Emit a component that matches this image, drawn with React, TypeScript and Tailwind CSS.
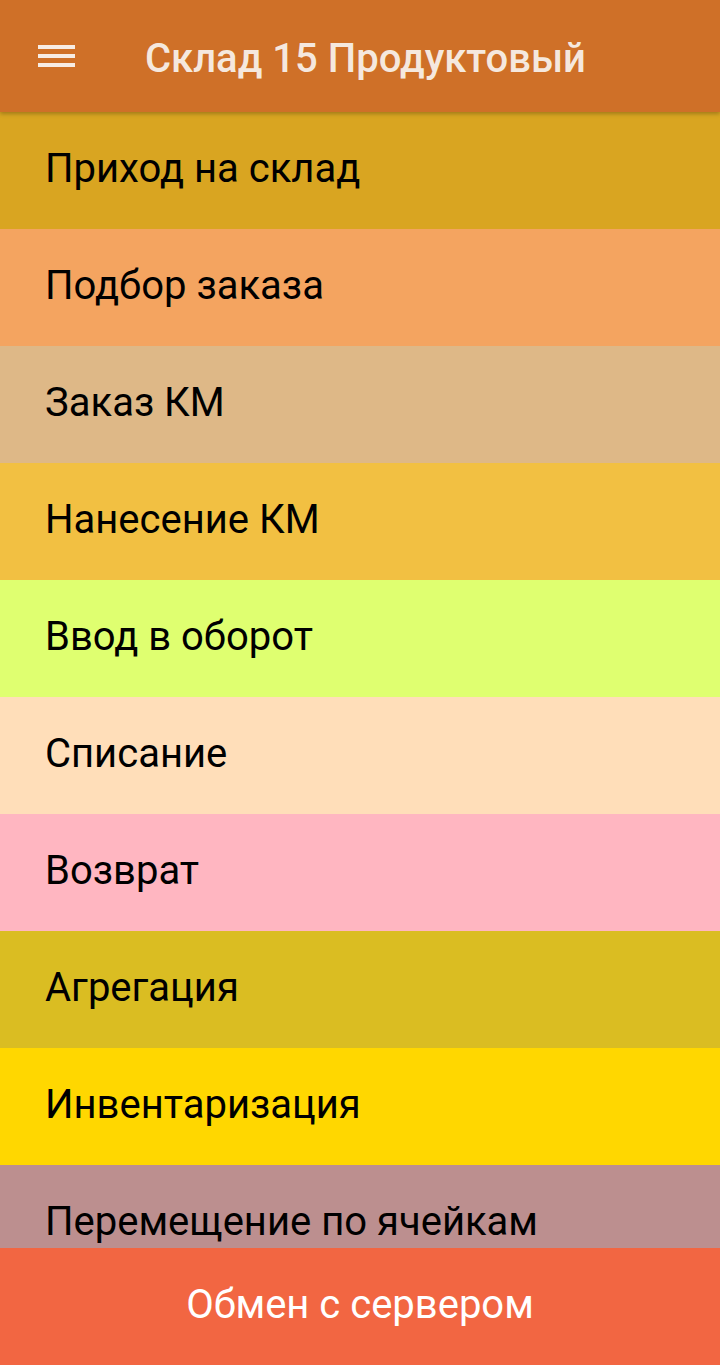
import React from 'react'

const items: { label: string; bg: string }[] = [
  { label: 'Приход на склад', bg: 'bg-[#d9a521]' },
  { label: 'Подбор заказа', bg: 'bg-[#f4a460]' },
  { label: 'Заказ КМ', bg: 'bg-[#deb887]' },
  { label: 'Нанесение КМ', bg: 'bg-[#f2c042]' },
  { label: 'Ввод в оборот', bg: 'bg-[#dfff70]' },
  { label: 'Списание', bg: 'bg-[#ffdeb9]' },
  { label: 'Возврат', bg: 'bg-[#ffb6c1]' },
  { label: 'Агрегация', bg: 'bg-[#dabd22]' },
  { label: 'Инвентаризация', bg: 'bg-[#ffd700]' },
  { label: 'Перемещение по ячейкам', bg: 'bg-[#bc8f8f]' },
]

export default function App() {
  return (
    <div className="flex h-[1365px] w-[720px] flex-col overflow-hidden font-['Roboto',sans-serif]">
      <header className="relative z-10 flex h-[112px] shrink-0 items-center bg-[#cf7028] shadow-[0_2px_4px_rgba(0,0,0,0.25)]">
        <button className="ml-[38px] flex h-[26px] w-[37px] flex-col justify-between py-[2px]">
          <span className="block h-[4px] w-full bg-[#f7ece4]" />
          <span className="block h-[4px] w-full bg-[#f7ece4]" />
          <span className="block h-[4px] w-full bg-[#f7ece4]" />
        </button>
        <h1 className="ml-[70px] pt-[6px] text-[40px] font-medium text-[#f5e8de]">Склад 15 Продуктовый</h1>
      </header>

      <div className="flex-1 overflow-hidden">
        {items.map((item) => (
          <div
            key={item.label}
            className={`flex h-[117px] items-center px-[45px] pb-[4px] text-[40px] text-black ${item.bg}`}
          >
            {item.label}
          </div>
        ))}
      </div>

      <button className="flex h-[117px] w-full shrink-0 items-center justify-center bg-[#f26642] pb-[4px] text-[40px] text-white">
        Обмен с сервером
      </button>
    </div>
  )
}
